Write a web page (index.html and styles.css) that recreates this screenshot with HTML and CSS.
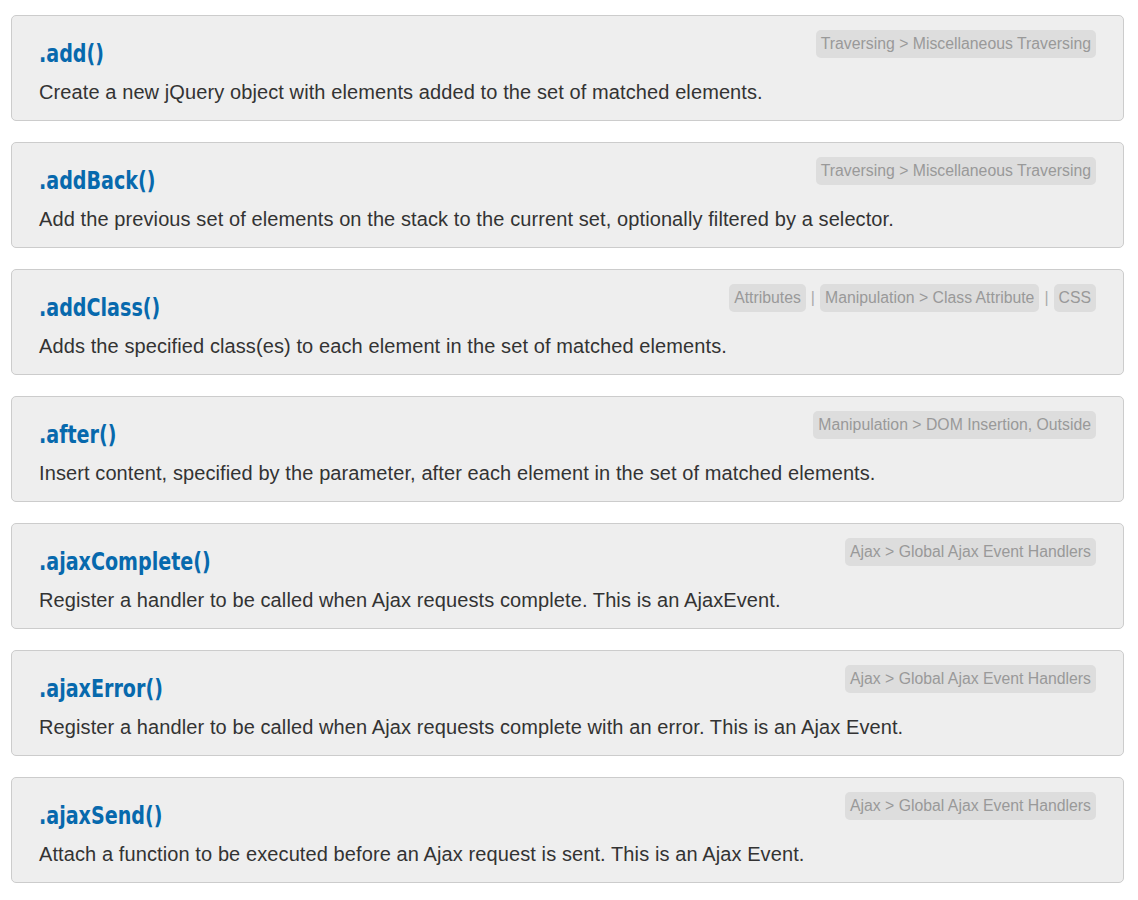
FILE: index.html
```html
<!DOCTYPE html>
<html>
<head>
<meta charset="utf-8">
<link rel="stylesheet" href="styles.css">
</head>
<body>
<div class="list">
  <article class="entry">
    <div class="entry-head">
      <h2 class="entry-title">.add()</h2>
      <div class="tags"><span class="tag">Traversing &gt; Miscellaneous Traversing</span></div>
    </div>
    <p class="desc">Create a new jQuery object with elements added to the set of matched elements.</p>
  </article>
  <article class="entry">
    <div class="entry-head">
      <h2 class="entry-title">.addBack()</h2>
      <div class="tags"><span class="tag">Traversing &gt; Miscellaneous Traversing</span></div>
    </div>
    <p class="desc">Add the previous set of elements on the stack to the current set, optionally filtered by a selector.</p>
  </article>
  <article class="entry">
    <div class="entry-head">
      <h2 class="entry-title">.addClass()</h2>
      <div class="tags"><span class="tag">Attributes</span><span class="sep">|</span><span class="tag">Manipulation &gt; Class Attribute</span><span class="sep">|</span><span class="tag">CSS</span></div>
    </div>
    <p class="desc">Adds the specified class(es) to each element in the set of matched elements.</p>
  </article>
  <article class="entry">
    <div class="entry-head">
      <h2 class="entry-title">.after()</h2>
      <div class="tags"><span class="tag">Manipulation &gt; DOM Insertion, Outside</span></div>
    </div>
    <p class="desc">Insert content, specified by the parameter, after each element in the set of matched elements.</p>
  </article>
  <article class="entry">
    <div class="entry-head">
      <h2 class="entry-title">.ajaxComplete()</h2>
      <div class="tags"><span class="tag">Ajax &gt; Global Ajax Event Handlers</span></div>
    </div>
    <p class="desc">Register a handler to be called when Ajax requests complete. This is an AjaxEvent.</p>
  </article>
  <article class="entry">
    <div class="entry-head">
      <h2 class="entry-title">.ajaxError()</h2>
      <div class="tags"><span class="tag">Ajax &gt; Global Ajax Event Handlers</span></div>
    </div>
    <p class="desc">Register a handler to be called when Ajax requests complete with an error. This is an Ajax Event.</p>
  </article>
  <article class="entry">
    <div class="entry-head">
      <h2 class="entry-title">.ajaxSend()</h2>
      <div class="tags"><span class="tag">Ajax &gt; Global Ajax Event Handlers</span></div>
    </div>
    <p class="desc">Attach a function to be executed before an Ajax request is sent. This is an Ajax Event.</p>
  </article>
</div>
</body>
</html>
```
FILE: styles.css
```css
html, body {
  margin: 0;
  padding: 0;
  background: #fff;
}
.list {
  display: flex;
  flex-direction: column;
  gap: 21px;
  padding: 15px 14px 0 11px;
}
.entry {
  background: #eeeeee;
  border: 1px solid #cccccc;
  border-radius: 5px;
  padding: 14px 27px 0 27px;
  box-sizing: content-box;
  height: 90px;
}
.entry-head {
  display: flex;
  justify-content: space-between;
  align-items: flex-start;
  height: 38px;
}
.entry-title {
  margin: 9px 0 0 0;
  font-family: "DejaVu Sans Condensed", "DejaVu Sans", sans-serif;
  font-weight: bold;
  font-size: 25px;
  line-height: 30px;
  color: #0769ad;
  transform: scaleX(0.85);
  transform-origin: left center;
}
.tags {
  display: flex;
  align-items: center;
  font-family: "Liberation Sans", Arial, sans-serif;
  font-size: 15.8px;
  color: #999999;
}
.tag {
  background: #dddddd;
  border-radius: 5px;
  padding: 0 5px;
  line-height: 28px;
  height: 28px;
}
.sep {
  margin: 0 5px;
  color: #aaaaaa;
}
.desc {
  margin: 12px 0 0 0;
  font-family: "Liberation Sans", Arial, sans-serif;
  font-size: 20px;
  letter-spacing: 0.1px;
  line-height: 24px;
  color: #333333;
}
```
